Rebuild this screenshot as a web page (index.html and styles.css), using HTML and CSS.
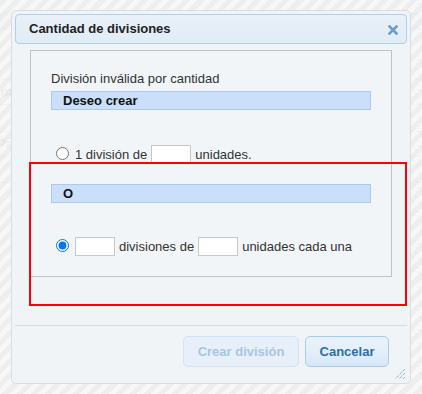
FILE: index.html
```html
<!DOCTYPE html>
<html lang="es">
<head>
  <meta charset="UTF-8" />
  <meta name="viewport" content="width=device-width, initial-scale=1" />
  <title>Cantidad de divisiones</title>
  <link rel="stylesheet" href="styles.css">
</head>
<body>

  <!-- Página de fondo -->
  <div class="page">
    <div class="page-top"></div>
    <div class="page-row page-row-head"><span>Importe</span></div>
    <div class="page-row"><span>Paquete</span></div>
    <div class="page-row page-row-input"><span class="page-field"></span></div>
  </div>

  <div class="overlay"></div>

  <!-- Diálogo -->
  <div class="dialog">
    <div class="dialog-title">
      <span>Cantidad de divisiones</span>
      <button class="dialog-close" title="Cerrar">
        <svg width="10" height="10" viewBox="0 0 10 10">
          <path d="M1.5 1.5 L8.5 8.5 M8.5 1.5 L1.5 8.5" stroke="#6b9ccb" stroke-width="2.6" stroke-linecap="square" fill="none" />
        </svg>
      </button>
    </div>

    <div class="dialog-content">
      <div class="box">
        <p class="box-label">División inválida por cantidad</p>
        <div class="box-bar">Deseo crear</div>
        <label class="choice choice-one">
          <input type="radio" name="modo">
          <span>1 división de</span>
          <input class="qty" type="text">
          <span>unidades.</span>
        </label>
        <div class="box-bar box-bar-or">O</div>
        <label class="choice choice-two">
          <input type="radio" name="modo" checked>
          <input class="qty" type="text">
          <span>divisiones de</span>
          <input class="qty" type="text">
          <span>unidades cada una</span>
        </label>
      </div>
    </div>

    <div class="dialog-buttons">
      <button class="btn btn-create" disabled>Crear división</button>
      <button class="btn btn-main">Cancelar</button>
    </div>

    <svg class="resize-handle" width="12" height="12" viewBox="0 0 12 12">
      <path d="M11 1 L1 11 M11 5 L5 11 M11 9 L9 11" stroke="#6d9bc8" stroke-width="1" stroke-dasharray="1 1" fill="none" />
    </svg>
  </div>

  <!-- Marca roja -->
  <div class="highlight"></div>

</body>
</html>
```

FILE: styles.css
```css
body {
  margin: 0;
  font-family: "Liberation Sans", Arial, sans-serif;
  font-size: 13px;
  color: #333;
  background-color: #f4f4f4;
  min-height: 394px;
  position: relative;
  overflow: hidden;
}

/* Página de fondo */
.page {
  padding-top: 12px;
}

.page-top {
  height: 17px;
  background-color: #e6ebf0;
  border-bottom: 1px solid #dde3e9;
}

.page-row {
  height: 24px;
  margin-top: 26px;
  border-top: 1px solid #e3e3e3;
  border-bottom: 1px solid #e3e3e3;
  color: #c6d2dd;
  font-weight: bold;
  line-height: 24px;
}

.page-row span {
  margin-left: -3px;
}

.page-row-head {
  margin-top: 49px;
}

.page-row-input {
  margin-top: 8px;
  height: 16px;
}

.overlay {
  position: absolute;
  top: 0; left: 0;
  width: 100%;
  height: 100%;
  background: repeating-linear-gradient(135deg, rgba(236,236,236,0.75) 0 5px, rgba(248,248,248,0.75) 5px 10px);
}

/* Diálogo */
.dialog {
  position: absolute;
  top: 10px;
  left: 11px;
  width: 400px;
  box-sizing: border-box;
  padding: 3px;
  background-color: #f1f4f7;
  border: 1px solid #dcdcdc;
  border-radius: 5px;
}

.dialog-title {
  display: flex;
  justify-content: space-between;
  align-items: center;
  height: 28px;
  padding: 0 8px 0 13px;
  background: linear-gradient(#e8f0f8, #e1ecf7);
  border: 1px solid #aed0ea;
  border-radius: 4px;
  font-weight: bold;
  color: #222;
  line-height: 28px;
}

.dialog-close {
  display: flex;
  padding: 0;
  margin-top: 2px;
  border: none;
  background: transparent;
  cursor: pointer;
}

.dialog-content {
  padding: 6px 15px 48px;
}

.box {
  border: 1px solid #c3c3c3;
  padding: 20px;
  background-color: #f2f5f8;
}

.box-label {
  margin: 0;
  line-height: 16px;
}

.box-bar {
  margin-top: 4px;
  padding-left: 11px;
  line-height: 17px;
  background-color: #cbdffa;
  border: 1px solid #a9cbf3;
  font-weight: bold;
  color: #111;
}

.box-bar-or {
  margin-top: 20px;
}

.choice {
  display: flex;
  align-items: center;
  gap: 4px;
  height: 19px;
  line-height: 19px;
  white-space: nowrap;
}

.choice-one {
  margin-top: 35px;
}

.choice-two {
  margin-top: 34px;
}

.choice input[type="radio"] {
  margin: 0 2px 3px 5px;
}

.qty {
  width: 40px;
  height: 19px;
  box-sizing: border-box;
  margin: 0;
  padding: 0 3px;
  border: 1px solid #c8c8c8;
  background-color: #fff;
  font: inherit;
}

/* Botones */
.dialog-buttons {
  display: flex;
  justify-content: flex-end;
  gap: 6px;
  padding: 10px 18px 13px;
  border-top: 1px solid #dcdcdc;
}

.btn {
  height: 31px;
  padding: 0;
  font-family: inherit;
  font-size: 13px;
  font-weight: bold;
  border-radius: 5px;
  cursor: pointer;
}

.btn-create {
  width: 116px;
}

.btn:disabled {
  color: #a8c6e0;
  background-color: #e7f0f8;
  border: 1px solid #d2e3f2;
  cursor: default;
}

.btn-main {
  width: 84px;
  color: #2c6fa6;
  background: linear-gradient(#eaf3fb 0%, #e2eef9 55%, #d5e8f8 100%);
  border: 1px solid #a8cbea;
}

.resize-handle {
  position: absolute;
  right: 4px;
  bottom: 3px;
}

/* Marca roja */
.highlight {
  position: absolute;
  top: 162px;
  left: 29px;
  width: 378px;
  height: 144px;
  box-sizing: border-box;
  border: 2px solid #ff0000;
}
```
